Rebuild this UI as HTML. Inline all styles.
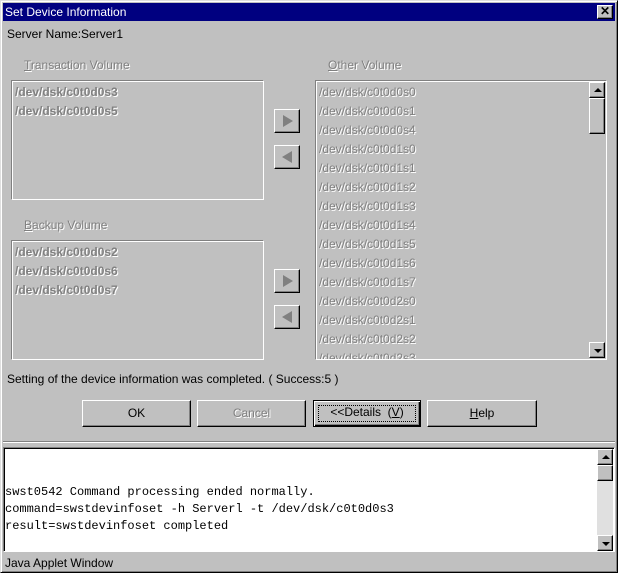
<!DOCTYPE html>
<html><head><style>
*{margin:0;padding:0;box-sizing:border-box}
body{width:618px;height:573px;background:#c0c0c0;position:relative;overflow:hidden;font-family:"Liberation Sans",sans-serif;font-size:12px;color:#000}
.a{position:absolute}
.dis{color:#808080;text-shadow:1px 1px 0 #fff}
.sunk{border:1px solid;border-color:#808080 #fff #fff #808080;box-shadow:inset 1px 1px 0 #fff}
.raised{background:#c0c0c0;border:1px solid;border-color:#fff #000 #000 #fff;box-shadow:inset -1px -1px 0 #808080}
.item{position:absolute;left:3px;line-height:19px;white-space:nowrap}
.btn{position:absolute;top:400px;height:27px;text-align:center;line-height:24px}
.mono{font-family:"Liberation Mono",monospace;font-size:12px;position:absolute;left:5px;line-height:17px;white-space:pre}
.tri{width:0;height:0;position:absolute}
</style></head><body>
<div class="a" style="left:0;top:0;width:618px;height:573px;border:1px solid;border-color:#dfdfdf #000 #000 #dfdfdf;box-shadow:inset 1px 1px 0 #fff,inset -1px -1px 0 #808080"></div>
<div class="a" style="left:3px;top:3px;width:612px;height:18px;background:#000080;color:#fff;line-height:18px;padding-left:2px">Set Device Information</div>
<div class="a raised" style="left:597px;top:5px;width:16px;height:14px;font-size:12px;font-weight:bold;line-height:11px;text-align:center">✕</div>
<div class="a" style="left:7px;top:27px">Server Name:Server1</div>

<div class="a dis" style="left:24px;top:58px"><u>T</u>ransaction Volume</div>
<div class="a sunk" style="left:11px;top:80px;width:253px;height:120px">
<div class="item dis" style="top:2px;font-weight:bold">/dev/dsk/c0t0d0s3</div>
<div class="item dis" style="top:21px;font-weight:bold">/dev/dsk/c0t0d0s5</div>
</div>
<div class="a dis" style="left:24px;top:218px"><u>B</u>ackup Volume</div>
<div class="a sunk" style="left:11px;top:240px;width:253px;height:120px">
<div class="item dis" style="top:2px;font-weight:bold">/dev/dsk/c0t0d0s2</div>
<div class="item dis" style="top:21px;font-weight:bold">/dev/dsk/c0t0d0s6</div>
<div class="item dis" style="top:40px;font-weight:bold">/dev/dsk/c0t0d0s7</div>
</div>

<div class="a raised" style="left:274px;top:109px;width:26px;height:24px"><div class="tri" style="left:8px;top:5px;border-left:10px solid #808080;border-top:6px solid transparent;border-bottom:6px solid transparent"></div></div>
<div class="a raised" style="left:274px;top:145px;width:26px;height:24px"><div class="tri" style="left:7px;top:5px;border-right:10px solid #808080;border-top:6px solid transparent;border-bottom:6px solid transparent"></div></div>
<div class="a raised" style="left:274px;top:269px;width:26px;height:24px"><div class="tri" style="left:8px;top:5px;border-left:10px solid #808080;border-top:6px solid transparent;border-bottom:6px solid transparent"></div></div>
<div class="a raised" style="left:274px;top:305px;width:26px;height:24px"><div class="tri" style="left:7px;top:5px;border-right:10px solid #808080;border-top:6px solid transparent;border-bottom:6px solid transparent"></div></div>

<div class="a dis" style="left:328px;top:58px"><u>O</u>ther Volume</div>
<div class="a sunk" style="left:315px;top:80px;width:292px;height:280px;overflow:hidden">
<div class="item dis" style="top:2px">/dev/dsk/c0t0d0s0</div>
<div class="item dis" style="top:21px">/dev/dsk/c0t0d0s1</div>
<div class="item dis" style="top:40px">/dev/dsk/c0t0d0s4</div>
<div class="item dis" style="top:59px">/dev/dsk/c0t0d1s0</div>
<div class="item dis" style="top:78px">/dev/dsk/c0t0d1s1</div>
<div class="item dis" style="top:97px">/dev/dsk/c0t0d1s2</div>
<div class="item dis" style="top:116px">/dev/dsk/c0t0d1s3</div>
<div class="item dis" style="top:135px">/dev/dsk/c0t0d1s4</div>
<div class="item dis" style="top:154px">/dev/dsk/c0t0d1s5</div>
<div class="item dis" style="top:173px">/dev/dsk/c0t0d1s6</div>
<div class="item dis" style="top:192px">/dev/dsk/c0t0d1s7</div>
<div class="item dis" style="top:211px">/dev/dsk/c0t0d2s0</div>
<div class="item dis" style="top:230px">/dev/dsk/c0t0d2s1</div>
<div class="item dis" style="top:249px">/dev/dsk/c0t0d2s2</div>
<div class="item dis" style="top:268px">/dev/dsk/c0t0d2s3</div>
</div>
<div class="a raised" style="left:589px;top:82px;width:16px;height:16px"><div class="tri" style="left:4px;top:5px;border-bottom:4px solid #000;border-left:4px solid transparent;border-right:4px solid transparent"></div></div>
<div class="a raised" style="left:589px;top:98px;width:16px;height:36px"></div>
<div class="a raised" style="left:589px;top:342px;width:16px;height:16px"><div class="tri" style="left:4px;top:6px;border-top:4px solid #000;border-left:4px solid transparent;border-right:4px solid transparent"></div></div>

<div class="a" style="left:7px;top:372px">Setting of the device information was completed. ( Success:5 )</div>

<div class="btn raised" style="left:82px;width:109px">OK</div>
<div class="btn raised dis" style="left:197px;width:109px">Cancel</div>
<div class="btn" style="left:313px;width:108px;border:1px solid #000;box-shadow:inset 1px 1px 0 #fff,inset -1px -1px 0 #000,inset -2px -2px 0 #808080"><div style="position:absolute;left:4px;top:4px;right:4px;bottom:4px;border:1px dotted #000"></div><span style="position:relative;top:-1px">&lt;&lt;Details &nbsp;(<u>V</u>)</span></div>
<div class="btn raised" style="left:427px;width:110px"><u>H</u>elp</div>

<div class="a" style="left:3px;top:441px;width:612px;height:2px;border-top:1px solid #808080;border-bottom:1px solid #fff"></div>
<div class="a" style="left:3px;top:447px;width:612px;height:105px;background:#fff;border:1px solid;border-color:#808080 #fff #fff #808080;box-shadow:inset 1px 1px 0 #000"></div>
<div class="mono" style="top:484px">swst0542 Command processing ended normally.</div>
<div class="mono" style="top:501px">command=swstdevinfoset -h Serverl -t /dev/dsk/c0t0d0s3</div>
<div class="mono" style="top:518px">result=swstdevinfoset completed</div>
<div class="a" style="left:597px;top:449px;width:16px;height:102px;background:#e0e0e0"></div>
<div class="a raised" style="left:597px;top:449px;width:16px;height:16px"><div class="tri" style="left:4px;top:5px;border-bottom:4px solid #000;border-left:4px solid transparent;border-right:4px solid transparent"></div></div>
<div class="a raised" style="left:597px;top:465px;width:16px;height:16px"></div>
<div class="a raised" style="left:597px;top:535px;width:16px;height:16px"><div class="tri" style="left:4px;top:6px;border-top:4px solid #000;border-left:4px solid transparent;border-right:4px solid transparent"></div></div>

<div class="a" style="left:5px;top:556px">Java Applet Window</div>
</body></html>
